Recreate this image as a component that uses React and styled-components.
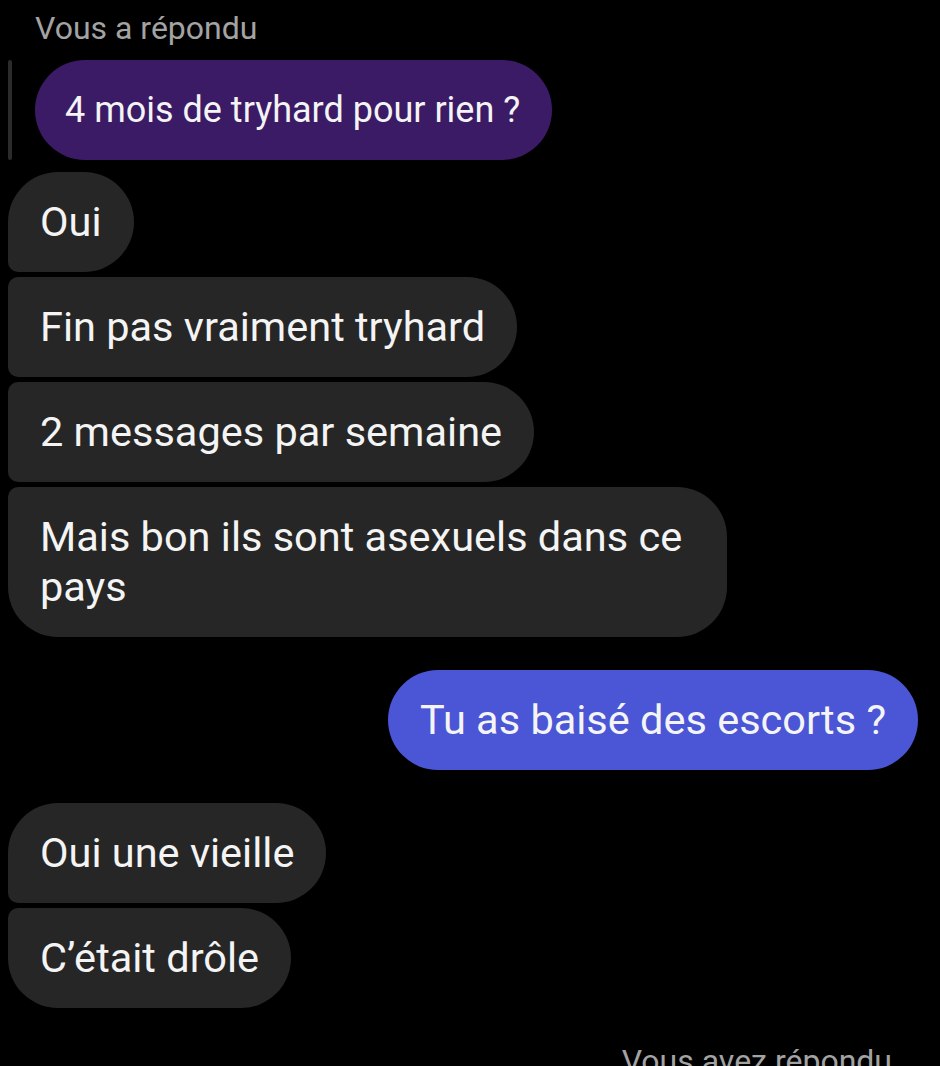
import React from "react";
import styled, { createGlobalStyle } from "styled-components";

const Global = createGlobalStyle`
  html, body { margin: 0; padding: 0; background: #000; }
  body { font-family: Roboto, "Noto Sans", sans-serif; -webkit-font-smoothing: antialiased; }
`;

const Screen = styled.div`
  width: 940px;
  height: 1066px;
  overflow: hidden;
  background: #000;
  display: flex;
  flex-direction: column;
  box-sizing: border-box;
  padding: 9px 0 0 8px;
  color: #f2f2f2;
`;

const ReplyLabel = styled.div`
  font-size: 32px;
  line-height: 38px;
  color: #a3a3a3;
  padding-left: ${(p) => p.$indent || 0}px;
  white-space: nowrap;
`;

const QuoteRow = styled.div`
  display: flex;
  align-items: stretch;
  gap: 23px;
  margin-top: 13px;
`;

const QuoteBar = styled.div`
  width: 4px;
  border-radius: 2px;
  background: #2b2b2b;
`;

const Group = styled.div`
  display: flex;
  flex-direction: column;
  align-items: ${(p) => (p.$right ? "flex-end" : "flex-start")};
  gap: 5px;
  margin-top: ${(p) => p.$mt || 0}px;
  padding-right: ${(p) => (p.$right ? "22px" : "0")};
`;

const big = "50px";
const small = "10px";

const Bubble = styled.div`
  box-sizing: border-box;
  max-width: 719px;
  padding: 25px ${(p) => p.$pr || 32}px 25px ${(p) => p.$pl || 32}px;
  font-size: ${(p) => p.$fs || 41.5}px;
  line-height: 50px;
  color: #f4f4f4;
  background: ${(p) => p.$bg || "#262626"};
  border-radius: ${(p) => p.$radius || `${small} ${big} ${big} ${small}`};
`;

const Bottom = styled.div`
  margin-top: 34px;
  display: flex;
  justify-content: flex-end;
  padding-right: 48px;
`;

export default function App() {
  return (
    <>
      <Global />
      <Screen>
        <ReplyLabel $indent={27}>Vous a répondu</ReplyLabel>
        <QuoteRow>
          <QuoteBar />
          <Bubble $bg="#3b1b66" $radius="50px" $fs={36} $pl={30}>
            4 mois de tryhard pour rien ?
          </Bubble>
        </QuoteRow>
        <Group $mt={12}>
          <Bubble $radius={`${big} ${big} ${big} ${small}`}>Oui</Bubble>
          <Bubble>Fin pas vraiment tryhard</Bubble>
          <Bubble>2 messages par semaine</Bubble>
          <Bubble $radius={`${small} ${big} ${big} ${big}`}>
            Mais bon ils sont asexuels dans ce pays
          </Bubble>
        </Group>
        <Group $right $mt={33}>
          <Bubble $bg="#4a56d6" $radius="50px">Tu as baisé des escorts ?</Bubble>
        </Group>
        <Group $mt={33}>
          <Bubble $radius={`${big} ${big} ${big} ${small}`}>Oui une vieille</Bubble>
          <Bubble $radius={`${small} ${big} ${big} ${big}`}>C’était drôle</Bubble>
        </Group>
        <Bottom>
          <ReplyLabel>Vous avez répondu</ReplyLabel>
        </Bottom>
      </Screen>
    </>
  );
}
